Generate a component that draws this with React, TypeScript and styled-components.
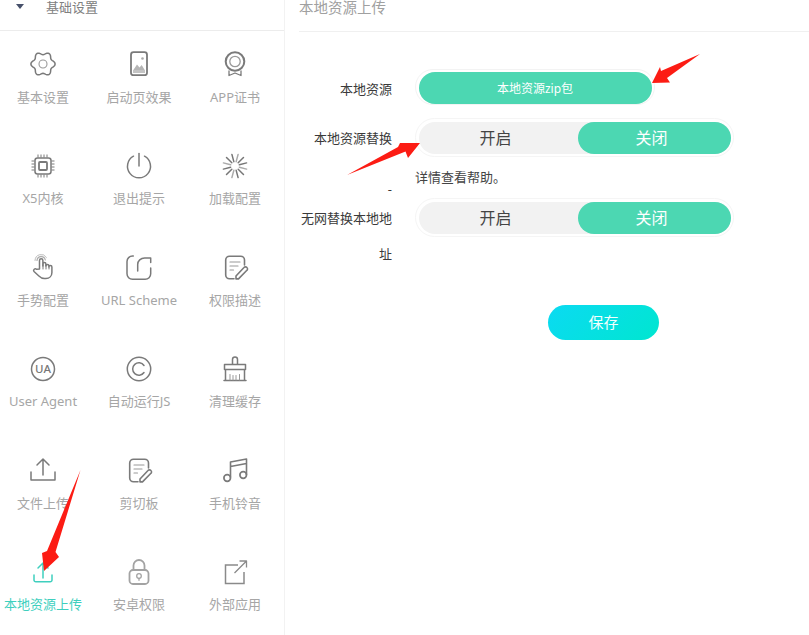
import React from "react";
import styled, { createGlobalStyle } from "styled-components";

const Global = createGlobalStyle`
  html, body { margin: 0; padding: 0; background: #fff; }
  body { font-family: "Noto Sans", "Noto Sans CJK SC", sans-serif; }
`;

const Page = styled.div`
  position: relative;
  display: flex;
  width: 809px;
  height: 635px;
  overflow: hidden;
`;

const Sidebar = styled.aside`
  flex: 0 0 284px;
  height: 635px;
  border-right: 1px solid #f2f2f2;
`;

const GroupHeader = styled.div`
  display: flex;
  align-items: flex-start;
  height: 30px;
  padding-left: 16px;
  border-bottom: 1px solid #ececec;
  font-size: 13px;
  line-height: 15px;
  color: #808080;
`;

const Caret = styled.span`
  width: 0;
  height: 0;
  margin-top: 4px;
  margin-right: 22px;
  border-left: 4.5px solid transparent;
  border-right: 4.5px solid transparent;
  border-top: 5px solid #46506a;
`;

const MenuGrid = styled.div`
  display: grid;
  grid-template-columns: repeat(3, 96px);
  grid-auto-rows: 101.5px;
  margin-left: -5px;
`;

const MenuCell = styled.div`
  display: flex;
  flex-direction: column;
  align-items: center;
  padding-top: 19px;
`;

const IconSvg = styled.svg<{ $color?: string }>`
  display: block;
  width: 28px;
  height: 28px;
  flex: none;
  fill: none;
  stroke: ${(p) => p.$color || "#7a7a7a"};
  stroke-width: 1.5;
  stroke-linecap: round;
  stroke-linejoin: round;
`;

const MenuLabel = styled.div<{ $active?: boolean }>`
  margin-top: 8.5px;
  font-size: 13px;
  line-height: 20px;
  white-space: nowrap;
  color: ${(p) => (p.$active ? "#3fcfbe" : "#a6a6a6")};
`;

const Main = styled.main`
  flex: 1;
  padding-left: 14px;
`;

const MainTitle = styled.div`
  height: 31px;
  border-bottom: 1px solid #f0f0f0;
  font-size: 14.5px;
  line-height: 15px;
  color: #a0a0a0;
`;

const Form = styled.div`
  display: flex;
  flex-direction: column;
  padding-top: 37px;
`;

const Row = styled.div<{ $gap?: number }>`
  display: flex;
  margin-bottom: ${(p) => p.$gap ?? 0}px;
`;

const Label = styled.div`
  width: 93px;
  margin-right: 23px;
  padding-top: 2px;
  flex: none;
  text-align: right;
  font-size: 13px;
  line-height: 36px;
  color: #3a3a3a;
`;

const UploadShell = styled.div`
  width: 240px;
  box-sizing: border-box;
  height: 36px;
  padding: 2px 2.5px 1px;
  border: 1px solid #f3f3f3;
  border-radius: 18px;
`;

const UploadButton = styled.div`
  height: 32px;
  border-radius: 16px;
  background: #4cd7b2;
  color: #fff;
  font-size: 12px;
  line-height: 34px;
  text-align: center;
`;

const ToggleShell = styled.div`
  width: 319px;
  box-sizing: border-box;
  height: 39px;
  padding: 3px;
  border: 1px solid #f5f5f5;
  border-radius: 20px;
`;

const ToggleTrack = styled.div`
  display: flex;
  height: 32px;
  width: 312px;
  border-radius: 16px;
  background: #f2f2f2;
`;

const ToggleOption = styled.div<{ $on?: boolean }>`
  box-sizing: border-box;
  width: ${(p) => (p.$on ? 153 : 159)}px;
  padding-right: 6px;
  border-radius: 16px;
  background: ${(p) => (p.$on ? "#4cd7b2" : "transparent")};
  color: ${(p) => (p.$on ? "#fff" : "#444")};
  font-size: 16px;
  line-height: 32px;
  text-align: center;
`;

const Help = styled.div`
  font-size: 13px;
  line-height: 20px;
  color: #444;
`;

const Dash = styled(Label)`
  padding-top: 12px;
  margin-bottom: -12px;
  line-height: 20px;
`;

const SaveButton = styled.div`
  width: 111px;
  height: 35px;
  margin: 33px 0 0 249px;
  border-radius: 18px;
  background: linear-gradient(135deg, #0bdaf2, #00e6d0);
  color: #f2fffd;
  font-size: 15px;
  line-height: 35px;
  text-align: center;
`;

const Arrows = styled.svg`
  position: absolute;
  left: 0;
  top: 0;
  width: 809px;
  height: 635px;
  pointer-events: none;
  fill: #fc1c14;
`;

type IP = { color?: string };
const G = (p: IP & { children: React.ReactNode }) => (
  <IconSvg viewBox="0 0 28 28" $color={p.color}>{p.children}</IconSvg>
);

const gearPath = (() => {
  const pts: string[] = [];
  for (let i = 0; i < 72; i++) {
    const t = (i / 72) * Math.PI * 2;
    const r = 10.7 + 1.4 * Math.cos(6 * t);
    pts.push(`${(14 + r * Math.cos(t)).toFixed(2)} ${(14 + r * Math.sin(t)).toFixed(2)}`);
  }
  return `M${pts.join("L")}Z`;
})();

const Gear = () => (
  <G>
    <path d={gearPath} />
    <circle cx="14" cy="14" r="4" strokeWidth="1.1" stroke="#999" />
  </G>
);
const PhoneImg = () => (
  <G>
    <rect x="6" y="2.200" width="16" height="23" rx="2.500" strokeWidth="1.800" />
    <path d="M8 20.500l4-6 2.500 3 2.200-2.500 3.300 5.500z" fill="#b5b5b5" stroke="none" />
    <rect x="8" y="20" width="12" height="3" fill="#c4c4c4" stroke="none" />
    <circle cx="17.500" cy="8.500" r="1.300" fill="#aaa" stroke="none" />
  </G>
);
const Cert = () => (
  <G>
    <circle cx="14" cy="11.500" r="9.300" strokeWidth="2" />
    <circle cx="14" cy="11.500" r="5.200" strokeWidth="1.300" stroke="#999" />
    <path d="M8 21v4.500l6-2.500 6 2.500V21" strokeWidth="1.300" />
  </G>
);
const Chip = () => (
  <G>
    <rect x="6" y="6" width="16" height="16" rx="2.500" />
    <rect x="10" y="10" width="8" height="8" rx="1" strokeWidth="1.800" />
    <path d="M9 2.500v3M12 2.500v3M15 2.500v3M18 2.500v3M9 22.500v3M12 22.500v3M15 22.500v3M18 22.500v3M2.500 9h3M2.500 12h3M2.500 15h3M2.500 18h3M22.500 9h3M22.500 12h3M22.500 15h3M22.500 18h3" strokeWidth="1" strokeLinecap="butt" />
  </G>
);
const Power = () => (
  <G>
    <path d="M8.500 4.200A11.500 11.500 0 1 0 19.500 4.200" />
    <path d="M14 1.500v12.500" />
  </G>
);
const Spinner = () => {
  const rays = [] as React.ReactNode[];
  for (let i = 0; i < 12; i++) {
    const a = (i * Math.PI) / 6 + Math.PI / 12;
    rays.push(
      <line
        key={i}
        x1={14 + 4.5 * Math.cos(a)}
        y1={14 + 4.5 * Math.sin(a)}
        x2={14 + 12 * Math.cos(a)}
        y2={14 + 12 * Math.sin(a)}
        strokeWidth={1.5}
        stroke={i % 3 === 0 ? "#aaa" : "#777"}
      />
    );
  }
  return <G>{rays}</G>;
};
const Hand = () => (
  <G>
    <path d="M10.500 16V7.500a1.700 1.700 0 0 1 3.400 0V13l0-2a1.500 1.500 0 0 1 3 0v2a1.500 1.500 0 0 1 3 0v1a1.500 1.500 0 0 1 3 0v5.500c0 3.500-2.500 6-6 6h-1.500c-2.500 0-4-1-5.500-2.500L5 18.500c-1.300-1.700 1-3.500 2.500-2.200z" />
    <path d="M8 7.500a4.200 4.200 0 0 1 8.300-.5" stroke="#aaa" strokeWidth="1.200" />
    <path d="M6 7.500a6.200 6.200 0 0 1 11.500-3" stroke="#bbb" strokeWidth="1" />
    <path d="M14 11v5M17 12v4M20 14v2" strokeWidth="1" />
  </G>
);
const Scheme = () => (
  <G>
    <path d="M8.300 3H7.500A5.500 5.500 0 0 0 2 8.500v12.300a5.500 5.500 0 0 0 5.500 5.500h12.700a5.500 5.500 0 0 0 5.500-5.500V15" />
    <path d="M12.700 18v-6.500c0-3.800 3-6.500 7-6.500h6v4.500" />
  </G>
);
const Note = () => (
  <G>
    <path d="M13 25.800H8.500A3.800 3.800 0 0 1 4.700 22V7A3.800 3.800 0 0 1 8.500 3.200h11.200A3.800 3.800 0 0 1 23.500 7v5" strokeWidth="1.600" />
    <path d="M9 9h10M9 13h8M9 17h3.500" strokeWidth="1.200" stroke="#999" />
    <path d="M15 23l8-8.500a1.900 1.900 0 0 1 2.900 0 1.900 1.900 0 0 1 0 2.800l-8.400 8.600H15z" strokeWidth="1.600" />
  </G>
);
const UaText = styled.text`
  font-family: "Noto Sans", sans-serif;
  font-size: 11.500px;
  font-weight: 500;
  fill: #777;
  stroke: none;
`;
const UA = () => (
  <G>
    <circle cx="14" cy="14" r="11.500" />
    <UaText x="14" y="18.200" textAnchor="middle">UA</UaText>
  </G>
);
const Copy = () => (
  <G>
    <circle cx="14" cy="14" r="11.700" />
    <path d="M19 10.500a6.200 6.200 0 1 0 0 7" />
  </G>
);
const Broom = () => (
  <G>
    <path d="M11.500 9V4.500a2.500 2.500 0 0 1 5 0V9" />
    <path d="M3.500 9.500h21v5h-21zM4.500 14.500v11h19v-11M3 25.500h22" />
    <path d="M9 19.500v5.500M12 20.500v4.500M15 20.500v4.500M18.500 19.500v5.500" strokeWidth="1" stroke="#999" />
  </G>
);
const Upload = ({ color, small }: IP & { small?: boolean }) => (
  <G color={color}>
    {small ? (
      <>
        <path d="M14 20V5M9 10l5-5 5 5" />
        <path d="M5 17v5a1.800 1.800 0 0 0 1.800 1.800h14.400A1.800 1.800 0 0 0 23 22v-5" />
      </>
    ) : (
      <>
        <path d="M14 19V3.500M8 9l6-6 6 6" />
        <path d="M2 16v8h24v-8" />
      </>
    )}
  </G>
);
const Music = () => (
  <G>
    <path d="M9.500 21V6l16-3v15.500M9.500 10.500l16-3" strokeWidth="1.600" />
    <circle cx="6.200" cy="22" r="3.300" strokeWidth="1.700" />
    <circle cx="22.200" cy="19" r="3.300" strokeWidth="1.700" />
  </G>
);
const Lock = () => (
  <G color="#a3a3a3">
    <path d="M8.500 12V7.500a5.500 5.500 0 0 1 11 0V12" strokeWidth="1.800" />
    <rect x="4.500" y="12" width="19" height="14" rx="3.500" strokeWidth="1.800" />
    <circle cx="14" cy="18" r="2.300" strokeWidth="1.300" />
    <path d="M14 20.300v2" strokeWidth="1.300" />
  </G>
);
const External = () => (
  <G color="#8a8a8a">
    <path d="M17 7H4.500v18.500H23V14" strokeLinecap="butt" strokeLinejoin="miter" />
    <path d="M13.500 15L25 3.500M18.500 3h7v6.500" strokeLinecap="butt" strokeWidth="1.300" />
  </G>
);

const items: { label: string; icon: React.ReactNode; active?: boolean }[] = [
  { label: "基本设置", icon: <Gear /> },
  { label: "启动页效果", icon: <PhoneImg /> },
  { label: "APP证书", icon: <Cert /> },
  { label: "X5内核", icon: <Chip /> },
  { label: "退出提示", icon: <Power /> },
  { label: "加载配置", icon: <Spinner /> },
  { label: "手势配置", icon: <Hand /> },
  { label: "URL Scheme", icon: <Scheme /> },
  { label: "权限描述", icon: <Note /> },
  { label: "User Agent", icon: <UA /> },
  { label: "自动运行JS", icon: <Copy /> },
  { label: "清理缓存", icon: <Broom /> },
  { label: "文件上传", icon: <Upload /> },
  { label: "剪切板", icon: <Note /> },
  { label: "手机铃音", icon: <Music /> },
  { label: "本地资源上传", icon: <Upload color="#3fcfbe" small />, active: true },
  { label: "安卓权限", icon: <Lock /> },
  { label: "外部应用", icon: <External /> },
];

const Toggle = () => (
  <ToggleShell>
    <ToggleTrack>
      <ToggleOption>开启</ToggleOption>
      <ToggleOption $on>关闭</ToggleOption>
    </ToggleTrack>
  </ToggleShell>
);

export default function App() {
  return (
    <Page>
      <Global />
      <Sidebar>
        <GroupHeader>
          <Caret />
          基础设置
        </GroupHeader>
        <MenuGrid>
          {items.map((it) => (
            <MenuCell key={it.label}>
              {it.icon}
              <MenuLabel $active={it.active}>{it.label}</MenuLabel>
            </MenuCell>
          ))}
        </MenuGrid>
      </Sidebar>
      <Main>
        <MainTitle>本地资源上传</MainTitle>
        <Form>
          <Row $gap={11}>
            <Label>本地资源</Label>
            <UploadShell>
              <UploadButton>本地资源zip包</UploadButton>
            </UploadShell>
          </Row>
          <Row $gap={10}>
            <Label>本地资源替换</Label>
            <Toggle />
          </Row>
          <Row $gap={11}>
            <Dash>-</Dash>
            <Help>详情查看帮助。</Help>
          </Row>
          <Row>
            <Label>无网替换本地地址</Label>
            <Toggle />
          </Row>
          <SaveButton>保存</SaveButton>
        </Form>
      </Main>
      <Arrows viewBox="0 0 809 635">
        <polygon points="80.500,470 55.500,552 59,557 44,571 42,553 47,551" />
        <polygon points="700,54 667,78 670,82.500 652,83 660,67 661,71" />
        <polygon points="347,175 398,147 400,143 420,143 408,158 405.500,151.500" />
      </Arrows>
    </Page>
  );
}
